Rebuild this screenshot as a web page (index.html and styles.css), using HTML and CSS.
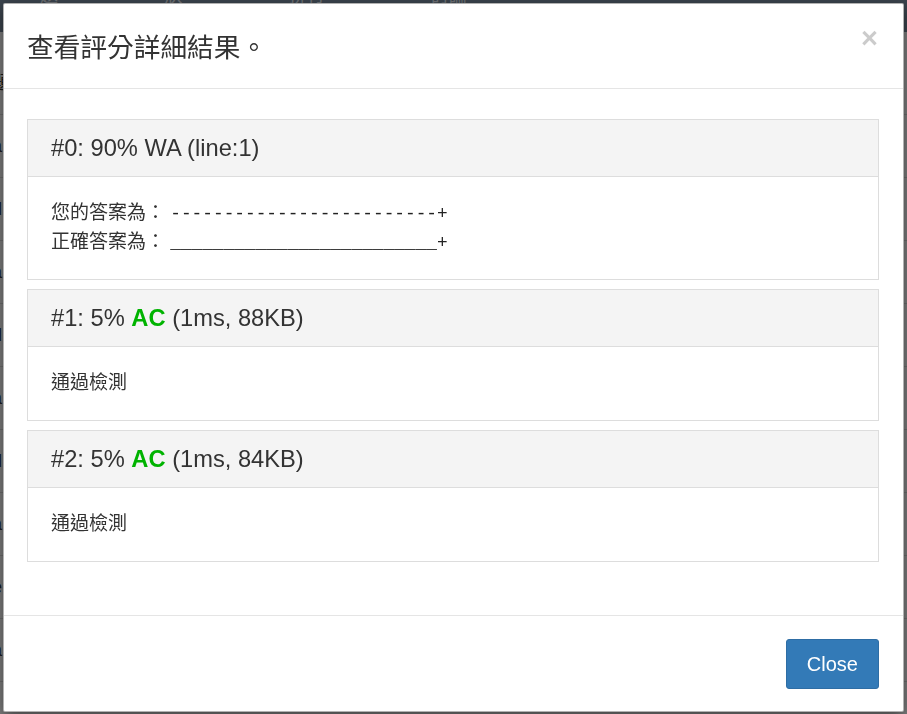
FILE: index.html
```html
<!DOCTYPE html>
<html lang="zh-Hant">
<head>
  <meta charset="UTF-8" />
  <meta name="viewport" content="width=device-width, initial-scale=1.0"/>
  <title>評分結果</title>
  <link rel="stylesheet" href="styles.css">
</head>
<body>
  <!-- page behind the dialog -->
  <div class="page">
    <nav class="navbar">
      <span>題目</span><span>狀態</span><span>排行榜</span><span>討論區</span>
      <span class="search">搜尋題目編號</span>
    </nav>
    <div class="rows">
      <div class="row">題</div>
      <div class="row">a</div>
      <div class="row">d</div>
      <div class="row">a</div>
      <div class="row">d</div>
      <div class="row">a</div>
      <div class="row">d</div>
      <div class="row">a</div>
      <div class="row">e</div>
      <div class="row">a</div>
    </div>
  </div>

  <div class="modal-backdrop"></div>

  <div class="modal">
    <div class="modal-dialog">
      <div class="modal-content">

        <div class="modal-header">
          <h4 class="modal-title">查看評分詳細結果。</h4>
          <button class="close" type="button">×</button>
        </div>

        <div class="modal-body">
          <div class="panel">
            <div class="panel-heading">#0: 90% WA (line:1)</div>
            <div class="panel-body answer">
              <div>您的答案為： <span class="mono">-------------------------+</span></div>
              <div>正確答案為： <span class="mono">_________________________+</span></div>
            </div>
          </div>

          <div class="panel">
            <div class="panel-heading">#1: 5% <b class="ac">AC</b> (1ms, 88KB)</div>
            <div class="panel-body">通過檢測</div>
          </div>

          <div class="panel">
            <div class="panel-heading">#2: 5% <b class="ac">AC</b> (1ms, 84KB)</div>
            <div class="panel-body">通過檢測</div>
          </div>
        </div>

        <div class="modal-footer">
          <button class="btn" type="button">Close</button>
        </div>

      </div>
    </div>
  </div>
</body>
</html>
```

FILE: styles.css
```css
body {
  margin: 0;
  padding: 0;
  font-family: "Liberation Sans", Arial, "Noto Sans CJK TC", sans-serif;
  color: #333;
  background: #fff;
  overflow: hidden;
}

/* background page */
.navbar {
  height: 32px;
  background: #77889b;
  color: #dde3ea;
  display: flex;
  align-items: flex-end;
  gap: 90px;
  padding: 0 40px;
  font-size: 18px;
  line-height: 24px;
  overflow: hidden;
}
.navbar .search {
  margin-left: 40px;
  background: #eee;
  color: #555;
  padding: 0 12px;
  width: 240px;
}
.rows {
  padding: 20px 0 0;
}
.row {
  height: 62px;
  border-bottom: 1px solid #ddd;
  font-size: 18px;
  line-height: 62px;
  margin-left: -8px;
}

.modal-backdrop {
  position: fixed;
  inset: 0;
  background: rgba(0, 0, 0, 0.5);
}
.modal {
  position: fixed;
  inset: 0;
}
.modal-dialog {
  width: 901px;
  margin: 3px 0 0 3px;
}
.modal-content {
  background: #fff;
  border: 1px solid rgba(0, 0, 0, 0.3);
  border-radius: 2px;
  box-shadow: 0 5px 15px rgba(0, 0, 0, 0.5);
}

.modal-header {
  display: flex;
  justify-content: space-between;
  align-items: flex-start;
  padding: 27px 25px 27px 23px;
  border-bottom: 1px solid #e5e5e5;
}
.modal-title {
  margin: 0;
  font-family: "Noto Sans CJK TC", sans-serif;
  font-size: 26.7px;
  font-weight: normal;
  line-height: 30px;
}
.close {
  padding: 0;
  border: none;
  background: none;
  font-family: "Liberation Sans", Arial, sans-serif;
  font-size: 29px;
  font-weight: bold;
  line-height: 14px;
  height: 14px;
  color: #000;
  opacity: 0.2;
  cursor: pointer;
}

.modal-body {
  padding: 30px 24px 53px 23px;
  display: flex;
  flex-direction: column;
  gap: 9px;
}
.panel {
  border: 1px solid #ddd;
}
.panel-heading {
  background: #f4f4f4;
  border-bottom: 1px solid #ddd;
  padding: 15px 23px;
  font-size: 23.7px;
  line-height: 26px;
}
.panel-body {
  padding: 22px 23px 23px;
  font-size: 19px;
  line-height: 28px;
}
.panel-body.answer {
  line-height: 28.5px;
}
.mono {
  font-family: "Liberation Mono", monospace;
  font-size: 17.8px;
  line-height: 1;
  color: #222;
}
.ac {
  color: #00b300;
}

.modal-footer {
  display: flex;
  justify-content: flex-end;
  padding: 23px 24px 22px 23px;
  border-top: 1px solid #e5e5e5;
}
.btn {
  background: #337ab7;
  border: 1px solid #2e6da4;
  border-radius: 3px;
  color: #fff;
  font-family: "Liberation Sans", Arial, sans-serif;
  font-size: 20px;
  line-height: 28px;
  padding: 10px 20px;
  cursor: pointer;
}
```
